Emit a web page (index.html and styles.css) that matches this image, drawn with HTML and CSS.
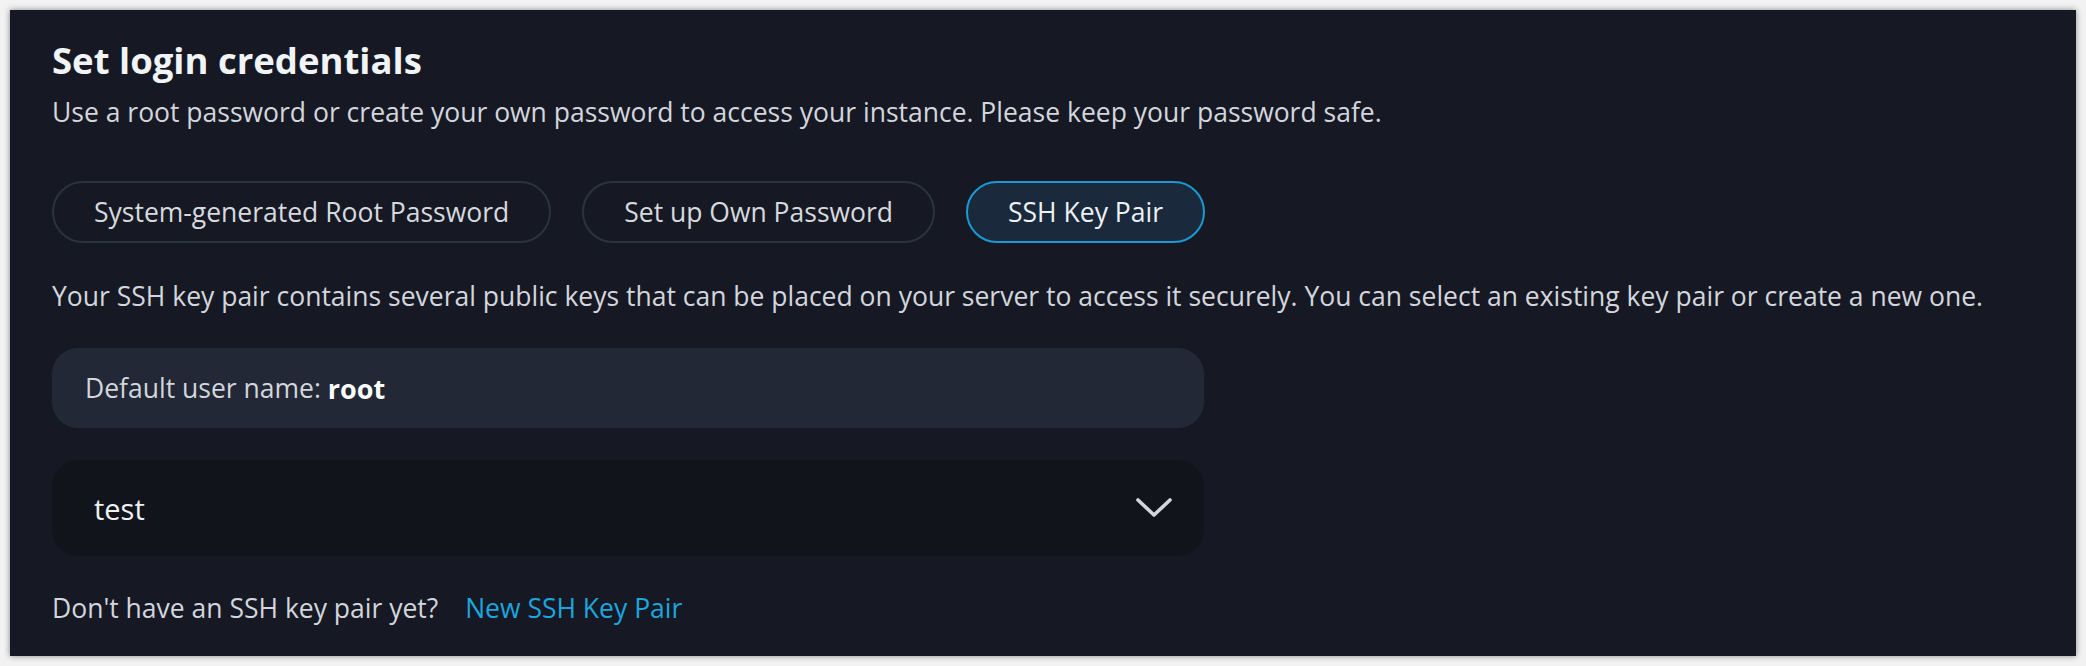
FILE: index.html
```html
<!DOCTYPE html>
<html lang="en">
<head>
<meta charset="utf-8">
<title>Set login credentials</title>
<link rel="stylesheet" href="styles.css">
</head>
<body>
<section class="panel">
  <h1 class="title">Set login credentials</h1>
  <p class="subtitle">Use a root password or create your own password to access your instance. Please keep your password safe.</p>
  <div class="tabs">
    <button class="tab">System-generated Root Password</button>
    <button class="tab">Set up Own Password</button>
    <button class="tab tab-active">SSH Key Pair</button>
  </div>
  <p class="desc">Your SSH key pair contains several public keys that can be placed on your server to access it securely. You can select an existing key pair or create a new one.</p>
  <div class="user-box">Default user name: <strong class="user-name">root</strong></div>
  <div class="select">
    <span class="select-value">test</span>
    <svg class="chevron" width="36" height="20" viewBox="0 0 36 20" aria-hidden="true">
      <path d="M2 2 L18 17 L34 2" fill="none" stroke="#d3d6dc" stroke-width="3.6" stroke-linecap="round" stroke-linejoin="round"/>
    </svg>
  </div>
  <p class="footer">Don't have an SSH key pair yet? <a class="link" href="#">New SSH Key Pair</a></p>
</section>
</body>
</html>
```

FILE: styles.css
```css
html, body {
  margin: 0;
  padding: 0;
}
body {
  background: #f2f2f3;
  width: 2086px;
  height: 666px;
  padding: 10px;
  box-sizing: border-box;
  font-family: "Open Sans", "Liberation Sans", sans-serif;
}
.panel {
  background: #161924;
  height: 646px;
  box-sizing: border-box;
  padding: 28px 42px 0;
  box-shadow: 0 0 6px rgba(0, 0, 0, 0.45);
  color: #d3d6dc;
}
.title {
  margin: 0;
  font-size: 36.5px;
  line-height: 44px;
  font-weight: 700;
  color: #f1f4f7;
}
.subtitle {
  margin: 14px 0 0;
  font-size: 26.5px;
  line-height: 32px;
}
.tabs {
  display: flex;
  gap: 31px;
  margin-top: 53px;
}
.tab {
  height: 62px;
  padding: 0 40px;
  border: 2px solid #2e323d;
  border-radius: 31px;
  background: transparent;
  color: #d6d9de;
  font-family: inherit;
  font-size: 26.5px;
}
.tab-active {
  border-color: #1a9ad4;
  background: #1a2a3c;
  color: #eef1f5;
}
.desc {
  margin: 37px 0 0;
  font-size: 26.5px;
  line-height: 32px;
}
.user-box {
  margin-top: 36px;
  width: 1152px;
  height: 80px;
  box-sizing: border-box;
  padding: 0 33px;
  display: flex;
  align-items: center;
  gap: 7px;
  background: #222836;
  border-radius: 26px;
  font-size: 26.5px;
}
.user-name {
  color: #ffffff;
  font-weight: 700;
  font-size: 27px;
}
.select {
  margin-top: 32px;
  width: 1152px;
  height: 96px;
  box-sizing: border-box;
  padding: 0 32px 0 42px;
  display: flex;
  align-items: center;
  justify-content: space-between;
  background: #12141b;
  border-radius: 26px;
}
.select-value {
  font-size: 29px;
  color: #eef1f5;
}
.footer {
  margin: 36px 0 0;
  font-size: 26.5px;
  line-height: 32px;
}
.link {
  margin-left: 20px;
  color: #1ba6df;
  text-decoration: none;
}
```
